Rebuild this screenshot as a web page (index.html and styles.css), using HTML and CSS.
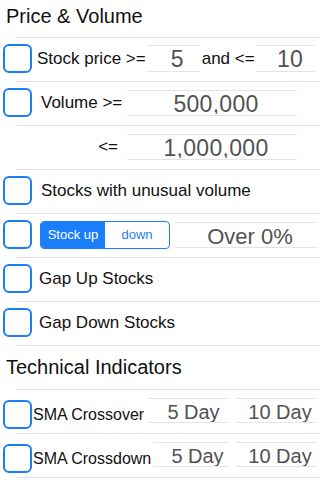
FILE: index.html
```html
<!DOCTYPE html>
<html>
<head>
<meta charset="utf-8">
<link rel="stylesheet" href="styles.css">
</head>
<body>
<div class="screen">
  <div class="title t1">Price &amp; Volume</div>
  <div class="group">
    <div class="row">
      <span class="cb"></span>
      <span class="label l-price">Stock price &gt;=</span>
      <span class="field f-price"><span class="val v23">5</span></span>
      <span class="label l-and">and &lt;=</span>
      <span class="field f-price2"><span class="val v23">10</span></span>
    </div>
    <div class="row">
      <span class="cb"></span>
      <span class="label l-vol">Volume &gt;=</span>
      <span class="field f-vol"><span class="val v23">500,000</span></span>
    </div>
    <div class="row">
      <span class="label l-le">&lt;=</span>
      <span class="field f-vol f-vol2"><span class="val v23">1,000,000</span></span>
    </div>
    <div class="row">
      <span class="cb"></span>
      <span class="label l-vol">Stocks with unusual volume</span>
    </div>
    <div class="row">
      <span class="cb"></span>
      <div class="seg">
        <span class="seg-item on">Stock up</span>
        <span class="seg-item">down</span>
      </div>
      <span class="field f-over"><span class="val v22">Over 0%</span></span>
    </div>
    <div class="row">
      <span class="cb"></span>
      <span class="label l-gap">Gap Up Stocks</span>
    </div>
    <div class="row">
      <span class="cb"></span>
      <span class="label l-gap">Gap Down Stocks</span>
    </div>
  </div>
  <div class="title t2">Technical Indicators</div>
  <div class="group">
    <div class="row">
      <span class="cb low"></span>
      <span class="label l-sma low">SMA Crossover</span>
      <span class="field f-day1"><span class="val v20">5 Day</span></span>
      <span class="field f-day2"><span class="val v20">10 Day</span></span>
    </div>
    <div class="row">
      <span class="cb low"></span>
      <span class="label l-sma low">SMA Crossdown</span>
      <span class="field f-day1 shift"><span class="val v20">5 Day</span></span>
      <span class="field f-day2"><span class="val v20">10 Day</span></span>
    </div>
  </div>
</div>
</body>
</html>
```
FILE: styles.css
```css
html, body {
  margin: 0;
  padding: 0;
  background: #ffffff;
}
body {
  font-family: "Liberation Sans", Arial, sans-serif;
  color: #111;
  width: 320px;
  height: 480px;
  overflow: hidden;
}
.screen {
  display: flex;
  flex-direction: column;
}
.title {
  font-size: 20px;
  padding-left: 6px;
  color: #111;
}
.t1 {
  height: 37px;
  line-height: 32px;
}
.t2 {
  height: 43px;
  line-height: 43px;
}
.group {
  padding-bottom: 1px;
  background: linear-gradient(#e0e0e0, #e0e0e0) 16px 100% / calc(100% - 16px) 1px no-repeat;
}
.row {
  height: 44px;
  box-sizing: border-box;
  padding-bottom: 1px;
  display: flex;
  align-items: center;
  background: linear-gradient(#e0e0e0, #e0e0e0) 16px 0 / calc(100% - 16px) 1px no-repeat;
}
.cb {
  flex: none;
  width: 29px;
  height: 29px;
  box-sizing: border-box;
  margin-left: 3px;
  border: 2px solid #1a7ef8;
  border-radius: 6px;
}
.label {
  flex: none;
  font-size: 17px;
  white-space: nowrap;
}
.low {
  margin-top: 8px;
}
.l-price { margin-left: 5px; }
.l-and { margin-left: 2px; }
.l-vol { margin-left: 9px; }
.l-le { margin-left: auto; margin-right: 9px; }
.l-gap { margin-left: 7px; }
.l-sma { margin-left: 1px; font-size: 16px; }

.field {
  flex: none;
  box-sizing: border-box;
  border-top: 1px solid #e4e4e4;
  border-bottom: 1px solid #e4e4e4;
  display: flex;
  justify-content: center;
  align-items: flex-start;
  padding-left: 8px;
  color: #525252;
  overflow: hidden;
  white-space: nowrap;
}
.val {
  display: block;
  overflow: hidden;
}
.v23 {
  font-size: 23px;
  line-height: 26px;
  height: 23px;
  letter-spacing: 0.3px;
}
.v22 {
  font-size: 22px;
  line-height: 27px;
  height: 23px;
}
.v20 {
  font-size: 20px;
  line-height: 27px;
  height: 23px;
}
.f-price {
  width: 53px;
  height: 27px;
  margin-left: 1px;
}
.f-price2 {
  width: 58px;
  height: 27px;
  margin-left: auto;
  margin-right: 5px;
}
.f-vol {
  width: 170px;
  height: 26px;
  margin-left: auto;
  margin-right: 23px;
}
.f-vol2 {
  margin-left: 0;
}
.f-over {
  width: 142px;
  height: 26px;
  margin-left: 5px;
}
.f-day1 {
  width: 81px;
  height: 25px;
  margin-left: auto;
  padding-left: 10px;
}
.f-day1.shift {
  width: 75px;
  padding-left: 12px;
}
.f-day2 {
  width: 81px;
  height: 25px;
  margin-left: 7px;
  margin-right: 3px;
  padding-left: 7px;
}
.seg {
  flex: none;
  margin-left: 8px;
  width: 130px;
  height: 28px;
  box-sizing: border-box;
  border: 1px solid #1a7ef8;
  border-radius: 4px;
  display: flex;
  overflow: hidden;
}
.seg-item {
  flex: 1;
  display: flex;
  align-items: center;
  justify-content: center;
  font-size: 13px;
  color: #1a7ef8;
}
.seg-item.on {
  background: #1a7ef8;
  color: #ffffff;
}
```
